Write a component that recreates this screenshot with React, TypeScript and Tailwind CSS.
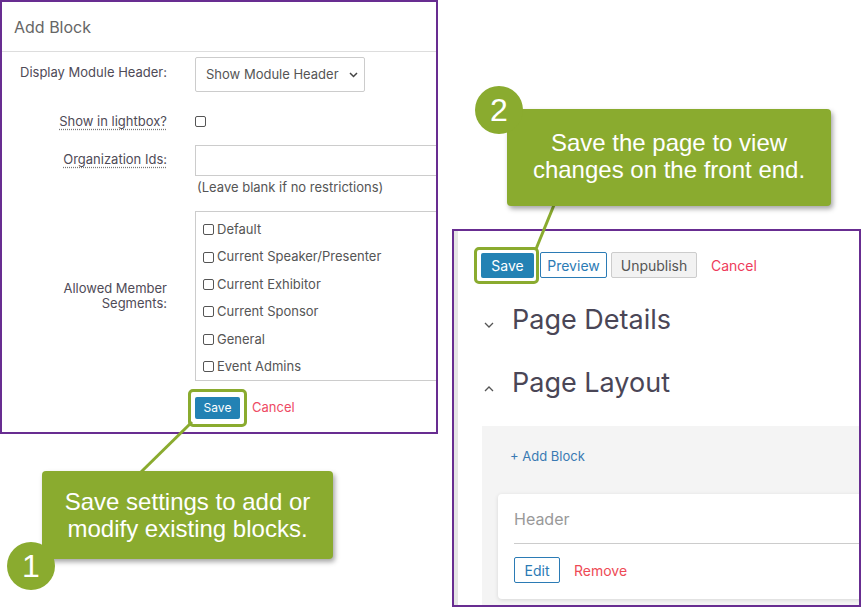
import React from "react";

const GREEN = "#8aab2f";

const segments = [
  "Default",
  "Current Speaker/Presenter",
  "Current Exhibitor",
  "Current Sponsor",
  "General",
  "Event Admins",
];

function Box({ size = 11 }: { size?: number }) {
  return (
    <span
      className="inline-block shrink-0 rounded-[2px] border border-[#555] bg-white"
      style={{ width: size, height: size }}
    />
  );
}

function AddBlockPanel() {
  return (
    <div className="absolute left-0 top-0 h-[434px] w-[438px] overflow-hidden border-2 border-[#682d91] bg-white text-[#4f4b57]">
      <div className="flex h-[50px] items-center border-b border-[#ddd] pl-[12px] text-[16px] text-[#666]">
        Add Block
      </div>

      {/* Display Module Header */}
      <div className="mt-[5px] flex">
        <div className="w-[165px] shrink-0 pt-[6px] text-right text-[13px] leading-[18px]">Display Module Header:</div>
        <div className="ml-[28px] flex h-[35px] w-[170px] shrink-0 items-center justify-between rounded-[2px] border border-[#ccc] pl-[10px] pr-[6px] text-[13px] text-[#555]">
          <span>Show Module Header</span>
          <svg width="9" height="6" viewBox="0 0 9 6" fill="none">
            <path d="M1 1l3.5 3.5L8 1" stroke="#444" strokeWidth="1.5" />
          </svg>
        </div>
      </div>

      {/* Show in lightbox */}
      <div className="mt-[18px] flex h-[22px] items-center">
        <div className="w-[165px] shrink-0 text-right text-[13px] leading-[18px]">
          <span className="underline decoration-dotted decoration-[#777] underline-offset-[3px]">Show in lightbox?</span>
        </div>
        <div className="ml-[28px] flex shrink-0 items-center">
          <Box />
        </div>
      </div>

      {/* Organization Ids */}
      <div className="mt-[13px] flex items-start">
        <div className="w-[165px] shrink-0 pt-[5px] text-right text-[13px] leading-[18px]">
          <span className="underline decoration-dotted decoration-[#777] underline-offset-[3px]">Organization Ids:</span>
        </div>
        <div className="ml-[28px] shrink-0">
          <div className="h-[31px] w-[300px] border border-[#ccc]" />
          <div className="mt-[2px] pl-[2px] text-[13px] leading-[18px] text-[#555]">(Leave blank if no restrictions)</div>
        </div>
      </div>

      {/* Allowed Member Segments */}
      <div className="mt-[15px] flex items-center">
        <div className="w-[165px] shrink-0 text-right text-[13px] leading-[15px]">
          <div>Allowed Member</div>
          <div>Segments:</div>
        </div>
        <div className="ml-[28px] h-[170px] w-[300px] shrink-0 border border-[#ccc] pt-[4px]">
          {segments.map((s) => (
            <div key={s} className="flex h-[27.4px] items-center pl-[7px] text-[13px] text-[#555]">
              <Box />
              <span className="ml-[3px]">{s}</span>
            </div>
          ))}
        </div>
      </div>

      {/* Actions */}
      <div className="ml-[193px] mt-[16px] flex items-center">
        <div className="relative flex h-[22px] w-[45px] items-center justify-center rounded-[2px] bg-[#2382b4] text-[12px] text-white">
          Save
          <span className="absolute -bottom-[8px] -left-[7px] -right-[7px] -top-[8px] rounded-[5px] border-[3px] border-[#8aab2f]" />
        </div>
        <span className="ml-[12px] text-[13px] text-[#ee4a64]">Cancel</span>
      </div>
    </div>
  );
}

function PagePanel() {
  return (
    <div className="absolute left-[452px] top-[229px] flex h-[378px] w-[409px] overflow-hidden border-2 border-[#682d91] bg-white text-[#4f4b57]">
      <div className="w-[4px] shrink-0 bg-[#e5e5e5]" />
      <div className="flex min-w-0 flex-1 flex-col pl-[23px] pt-[21px]">
        {/* Toolbar */}
        <div className="flex items-center text-[14px]">
          <div className="relative flex h-[25px] w-[53px] items-center justify-center rounded-[2px] bg-[#2382b4] text-white">
            Save
            <span className="absolute -bottom-[6px] -left-[7px] -right-[5px] -top-[6px] rounded-[5px] border-[3px] border-[#8aab2f]" />
          </div>
          <div className="ml-[6px] flex h-[26px] w-[67px] items-center justify-center rounded-[2px] border border-[#2b7bb5] text-[#2b7bb5]">
            Preview
          </div>
          <div className="ml-[4px] flex h-[26px] w-[86px] items-center justify-center rounded-[2px] border border-[#ccc] bg-[#f2f2f2] text-[#555]">
            Unpublish
          </div>
          <span className="ml-[14px] text-[#ee3b5b]">Cancel</span>
        </div>

        {/* Sections */}
        <div className="mt-[25px] flex h-[34px] items-center">
          <span className="flex w-[31px] pl-[3px] pt-[10px]">
            <svg width="10" height="6" viewBox="0 0 10 6" fill="none">
              <path d="M1 1l4 4 4-4" stroke="#555" strokeWidth="1.3" />
            </svg>
          </span>
          <span className="text-[27px] leading-[34px] text-[#4a4656]">Page Details</span>
        </div>
        <div className="mt-[29px] flex h-[34px] items-center">
          <span className="flex w-[31px] pl-[3px] pt-[12px]">
            <svg width="10" height="6" viewBox="0 0 10 6" fill="none">
              <path d="M1 5l4-4 4 4" stroke="#555" strokeWidth="1.3" />
            </svg>
          </span>
          <span className="text-[27px] leading-[34px] text-[#4a4656]">Page Layout</span>
        </div>

        {/* Layout blocks */}
        <div className="ml-[1px] mt-[26px] flex-1 bg-[#f4f4f4]">
          <div className="pl-[28px] pt-[21px] text-[13px] leading-[18px] text-[#3a7ab3]">+ Add Block</div>
          <div className="ml-[16px] mt-[29px] h-[105px] w-[400px] rounded-[4px] bg-white pl-[16px] pt-[15px] shadow-[0_1px_4px_rgba(0,0,0,0.12)]">
            <div className="border-b border-[#ccc] pb-[14px] text-[16px] leading-[20px] text-[#999]">Header</div>
            <div className="mt-[13px] flex items-center text-[14px]">
              <div className="flex h-[26px] w-[46px] items-center justify-center rounded-[2px] border border-[#2b7bb5] text-[#2b7bb5]">
                Edit
              </div>
              <span className="ml-[14px] text-[#ee4a55]">Remove</span>
            </div>
          </div>
        </div>
      </div>
    </div>
  );
}

function Callout({
  className,
  lines,
}: {
  className: string;
  lines: string[];
}) {
  return (
    <div
      className={`absolute flex flex-col items-center justify-center rounded-[4px] text-center text-[24px] leading-[27px] text-white shadow-[2px_3px_5px_rgba(0,0,0,0.35)] ${className}`}
      style={{ backgroundColor: GREEN, fontFamily: '"Liberation Sans", Arial, sans-serif' }}
    >
      {lines.map((l) => (
        <div key={l}>{l}</div>
      ))}
    </div>
  );
}

function StepBadge({ n, className }: { n: string; className: string }) {
  return (
    <div
      className={`absolute flex h-[48px] w-[48px] items-center justify-center rounded-full text-[32px] text-white ${className}`}
      style={{ backgroundColor: GREEN, fontFamily: '"Liberation Sans", Arial, sans-serif' }}
    >
      {n}
    </div>
  );
}

export default function App() {
  return (
    <div
      className="relative h-[608px] w-[861px] overflow-hidden bg-white"
      style={{ fontFamily: 'Inter, "Noto Sans", sans-serif' }}
    >
      <AddBlockPanel />
      <PagePanel />

      {/* connector lines from the callouts to the buttons */}
      <svg className="pointer-events-none absolute left-0 top-0" width="861" height="608">
        <line x1="192" y1="422" x2="140" y2="473" stroke={GREEN} strokeWidth="3" />
        <line x1="554" y1="205" x2="536" y2="249" stroke={GREEN} strokeWidth="3" />
      </svg>

      <Callout
        className="left-[42px] top-[471px] h-[88px] w-[291px] pb-[1px]"
        lines={["Save settings to add or", "modify existing blocks."]}
      />
      <StepBadge n="1" className="left-[7px] top-[542px]" />

      <Callout
        className="left-[507px] top-[109px] h-[97px] w-[324px] pb-[3px]"
        lines={["Save the page to view", "changes on the front end."]}
      />
      <StepBadge n="2" className="left-[475px] top-[86px]" />
    </div>
  );
}
